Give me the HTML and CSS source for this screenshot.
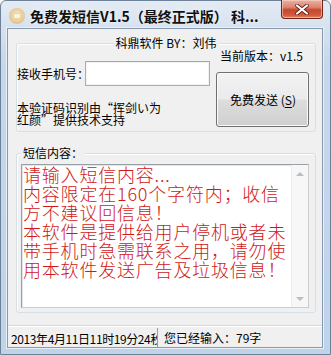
FILE: index.html
```html
<!DOCTYPE html>
<html lang="zh-CN">
<head>
<meta charset="utf-8">
<title>免费发短信V1.5</title>
<link rel="stylesheet" href="styles.css">
</head>
<body>
<div class="window">
  <div class="titlebar">
    <span class="app-icon"><span class="app-icon-inner"></span></span>
    <span class="title">免费发短信V1.5（最终正式版） 科...</span>
    <span class="close-btn">
      <svg width="16" height="11" viewBox="0 0 16 11"><path d="M3 1.5 L13 9.5 M13 1.5 L3 9.5" stroke="#5a1a10" stroke-width="3.6" stroke-linecap="round"/><path d="M3 1.5 L13 9.5 M13 1.5 L3 9.5" stroke="#ffffff" stroke-width="2.2" stroke-linecap="round"/></svg>
    </span>
  </div>
  <div class="client">
    <div class="group group-top">
      <span class="legend legend-center">科鼎软件 BY：刘伟</span>
      <div class="left-col">
        <div class="phone-row">
          <span class="phone-label">接收手机号：</span>
          <span class="phone-input"></span>
        </div>
        <div class="info">本验证码识别由“挥剑い为<br>红颜”提供技术支持</div>
      </div>
      <div class="right-col">
        <div class="version">当前版本：v1.5</div>
        <div class="send-btn">免费发送 (<u>S</u>)</div>
      </div>
    </div>
    <div class="group group-msg">
      <span class="legend legend-left">短信内容：</span>
      <div class="memo">
        <div class="memo-text">请输入短信内容...<br>内容限定在160个字符内；收信<br>方不建议回信息！<br>本软件是提供给用户停机或者未<br>带手机时急需联系之用，请勿使<br>用本软件发送广告及垃圾信息！</div>
        <div class="vscroll">
          <span class="arrow arrow-up"></span>
          <span class="arrow arrow-down"></span>
        </div>
      </div>
    </div>
    <div class="statusbar">
      <div class="panel panel-time"><span class="panel-text">2013年4月11日11时19分24秒</span></div>
      <div class="panel panel-count">您已经输入：79字</div>
    </div>
  </div>
</div>
</body>
</html>
```
FILE: styles.css
```css
* { box-sizing: border-box; }

html, body {
  margin: 0;
  padding: 0;
  background: #ffffff;
}

body {
  font-family: "Noto Sans CJK SC", "Noto Sans", sans-serif;
  font-size: 12px;
  line-height: 12px;
  color: #000000;
}

.window {
  width: 331px;
  height: 355px;
  display: flex;
  flex-direction: column;
  border: 1px solid #6d8198;
  border-radius: 6px 6px 0 0;
  padding: 0 7px 6px 6px;
  background: linear-gradient(#e4ebf4 0px, #d7e2ee 26px, #c6d8eb 60px, #bfd3e9 100%);
}

.titlebar {
  height: 27px;
  display: flex;
  align-items: center;
}

.app-icon {
  width: 16px;
  height: 16px;
  margin-left: 2px;
  margin-top: 2px;
  border-radius: 50%;
  background: radial-gradient(circle at 50% 45%, #f8ead0 0%, #e8cc9a 55%, #d2ae78 100%);
  display: flex;
  align-items: center;
  justify-content: center;
  flex: none;
}

.app-icon-inner {
  width: 8px;
  height: 6px;
  background: #fbf4dc;
  border: 1px solid #e7d3a6;
}

.title {
  margin-left: 5px;
  margin-top: 3px;
  font-size: 14px;
  font-weight: bold;
  line-height: 16px;
  color: #111111;
  white-space: nowrap;
  flex: 1;
  text-shadow: 0 0 4px #f4f8fc;
}

.close-btn {
  align-self: flex-start;
  margin-top: -1px;
  width: 42px;
  height: 19px;
  flex: none;
  border: 1px solid #6e2418;
  border-top: none;
  border-radius: 0 0 4px 4px;
  background: linear-gradient(#eab1a4 0%, #dc8671 40%, #c8452c 55%, #d25c3c 85%, #e48a64 100%);
  box-shadow: inset 0 0 0 1px rgba(255, 220, 210, 0.55);
  display: flex;
  align-items: center;
  justify-content: center;
}

.client {
  flex: 1;
  display: flex;
  flex-direction: column;
  background: #f0f0f0;
  border: 1px solid #8799ae;
  box-shadow: 0 0 0 1px #e9f0f8;
}

.group {
  position: relative;
  margin: 14px 6px 0 8px;
  border: 1px solid #d5dfe5;
  border-radius: 3px;
  box-shadow: inset 1px 1px 0 #ffffff;
}

.legend {
  position: absolute;
  top: -7px;
  background: #f0f0f0;
  white-space: nowrap;
  line-height: 12px;
  padding: 0 2px;
}

.legend-center {
  left: 50%;
  transform: translateX(-50%);
}

.legend-left {
  left: 4px;
}

.group-top {
  height: 89px;
  display: flex;
  gap: 6px;
  padding-right: 6px;
}

.left-col {
  width: 193px;
  padding-top: 17px;
}

.phone-row {
  display: flex;
  align-items: center;
  height: 25px;
}

.phone-label {
  width: 68px;
  flex: none;
  white-space: nowrap;
  overflow: visible;
}

.phone-input {
  width: 125px;
  height: 25px;
  background: #ffffff;
  border: 1px solid #abadb3;
  border-top-color: #a3a6ad;
  box-shadow: inset 0 0 0 1px #f2f2f2;
}

.info {
  margin-top: 16px;
  line-height: 12px;
  white-space: nowrap;
}

.right-col {
  width: 93px;
  display: flex;
  flex-direction: column;
}

.version {
  margin-top: 6px;
  margin-right: 6px;
  text-align: right;
  white-space: nowrap;
  line-height: 12px;
}

.send-btn {
  margin-top: 10px;
  height: 55px;
  border: 1px solid #707070;
  border-radius: 3px;
  background: linear-gradient(#f2f2f2 0%, #ebebeb 48%, #dddddd 52%, #cfcfcf 100%);
  box-shadow: inset 0 0 0 1px #fafafa;
  display: flex;
  align-items: center;
  justify-content: center;
  white-space: nowrap;
  padding-left: 1px;
}

.send-btn u {
  text-decoration-thickness: 1px;
  text-underline-offset: 2px;
}

.group-msg {
  margin-top: 21px;
  height: 160px;
  padding: 10px 6px 4px 4px;
  display: flex;
}

.memo {
  flex: 1;
  display: flex;
  background: #ffffff;
  border: 1px solid #9aa0a8;
  border-right-color: #c9ccd1;
  border-bottom-color: #c9ccd1;
  box-shadow: inset 1px 1px 0 #e2e3e6;
}

.memo-text {
  flex: 1;
  padding: 0 0 0 1px;
  font-size: 18px;
  font-weight: 300;
  letter-spacing: 0.8px;
  line-height: 19px;
  color: #d01818;
  white-space: nowrap;
  overflow: hidden;
}

.vscroll {
  width: 17px;
  flex: none;
  background: #f7f7f7;
  border-left: 1px solid #ececec;
  display: flex;
  flex-direction: column;
  justify-content: space-between;
}

.arrow {
  height: 17px;
  display: flex;
  align-items: center;
  justify-content: center;
}

.arrow::before {
  content: "";
  width: 0;
  height: 0;
  border-left: 4px solid transparent;
  border-right: 4px solid transparent;
}

.arrow-up::before {
  border-bottom: 4px solid #bdbdbd;
}

.arrow-down::before {
  border-top: 4px solid #bdbdbd;
}

.statusbar {
  margin-top: 12px;
  flex: 1;
  display: flex;
  border-top: 1px solid #d7d7d7;
  box-shadow: inset 0 1px 0 #ffffff;
}

.panel {
  display: flex;
  align-items: center;
  white-space: nowrap;
  padding-top: 2px;
}

.panel-time {
  width: 150px;
  padding-left: 3px;
  border-right: 1px solid #9a9a9a;
  overflow: hidden;
  margin-top: 2px;
}

.panel-time .panel-text {
  letter-spacing: -0.4px;
}

.panel-count {
  padding-left: 6px;
}
```
